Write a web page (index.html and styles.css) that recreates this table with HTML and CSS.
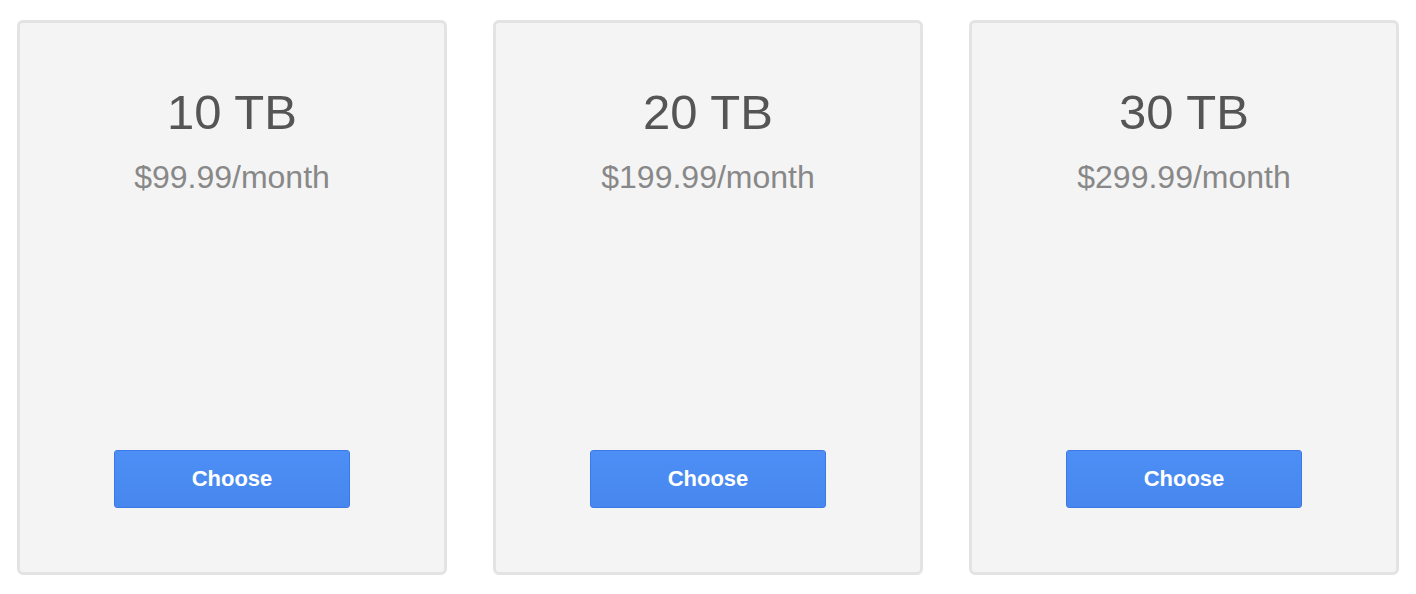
FILE: index.html
```html
<!DOCTYPE html>
<html>
<head>
<meta charset="utf-8">
<link rel="stylesheet" href="styles.css">
</head>
<body>
<div class="plans">
  <div class="card">
    <div class="size">10 TB</div>
    <div class="price">$99.99/month</div>
    <button class="choose">Choose</button>
  </div>
  <div class="card">
    <div class="size">20 TB</div>
    <div class="price">$199.99/month</div>
    <button class="choose">Choose</button>
  </div>
  <div class="card">
    <div class="size">30 TB</div>
    <div class="price">$299.99/month</div>
    <button class="choose">Choose</button>
  </div>
</div>
</body>
</html>
```
FILE: styles.css
```css
html, body {
  margin: 0;
  padding: 0;
  background: #ffffff;
}
body {
  font-family: "Liberation Sans", Arial, sans-serif;
}
.plans {
  display: flex;
  gap: 46px;
  padding: 20px 17px 19px 17px;
}
.card {
  flex: 1;
  height: 555px;
  box-sizing: border-box;
  border: 3px solid #e3e3e3;
  border-radius: 6px;
  background: #f4f4f4;
  display: flex;
  flex-direction: column;
  align-items: center;
  padding-top: 61px;
  padding-bottom: 64px;
}
.size {
  font-size: 49px;
  line-height: 56px;
  color: #555555;
}
.price {
  margin-top: 17px;
  font-size: 32px;
  line-height: 40px;
  color: #888888;
}
.choose {
  margin-top: auto;
  width: 236px;
  height: 58px;
  box-sizing: border-box;
  border: 1px solid #3b78e7;
  border-radius: 3px;
  background: linear-gradient(#4d8ff6, #4787ee);
  color: #ffffff;
  font-family: "Liberation Sans", Arial, sans-serif;
  font-weight: bold;
  font-size: 22px;
  padding: 0;
}
```
